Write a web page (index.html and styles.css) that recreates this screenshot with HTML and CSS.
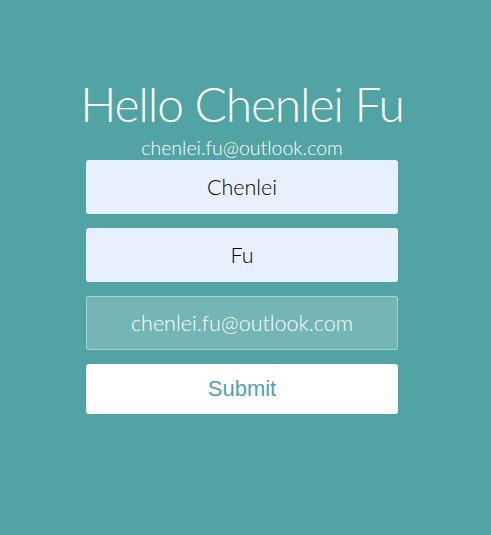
FILE: index.html
```html
<!DOCTYPE html>
<html>
<head>
<meta charset="utf-8">
<link rel="stylesheet" href="styles.css">
</head>
<body>
<main class="page">
  <h1 class="title">Hello Chenlei Fu</h1>
  <p class="subtitle">chenlei.fu@outlook.com</p>
  <form class="form">
    <input class="field field-filled" type="text" value="Chenlei">
    <input class="field field-filled" type="text" value="Fu">
    <input class="field field-ghost" type="email" value="chenlei.fu@outlook.com">
    <button class="submit" type="button">Submit</button>
  </form>
</main>
</body>
</html>
```
FILE: styles.css
```css
html, body {
  margin: 0;
  padding: 0;
  height: 100%;
  background: #52a3a3;
}
body {
  font-family: "Lato", "Noto Sans", sans-serif;
  color: #fff;
}
.page {
  display: flex;
  flex-direction: column;
  align-items: center;
  padding: 74px 7px 0 0;
}
.title {
  margin: 0;
  font-family: "Lato", "Noto Sans", sans-serif;
  font-weight: 300;
  font-size: 48px;
  letter-spacing: -1.2px;
  line-height: 60px;
  color: #fff;
}
.subtitle {
  margin: 0;
  font-family: "Lato", "Noto Sans", sans-serif;
  font-weight: 300;
  font-size: 19.5px;
  line-height: 22px;
  margin-top: 3px;
}
.form {
  display: flex;
  flex-direction: column;
  gap: 14px;
  width: 312px;
  margin-top: 1px;
}
.field {
  box-sizing: border-box;
  width: 312px;
  height: 54px;
  border-radius: 3px;
  text-align: center;
  font-family: "Lato", "Noto Sans", sans-serif;
  font-weight: 300;
  font-size: 21.5px;
  outline: none;
  padding: 0;
}
.field-filled {
  background: #e8f0fe;
  border: none;
  color: #000;
}
.field-ghost {
  background: rgba(255,255,255,0.2);
  border: 1px solid rgba(255,255,255,0.4);
  color: #fff;
}
.submit {
  height: 50px;
  width: 312px;
  border: none;
  border-radius: 3px;
  background: #fff;
  color: #52a3a3;
  font-family: "Liberation Sans", Arial, sans-serif;
  font-size: 22px;
  padding: 0;
}
```
